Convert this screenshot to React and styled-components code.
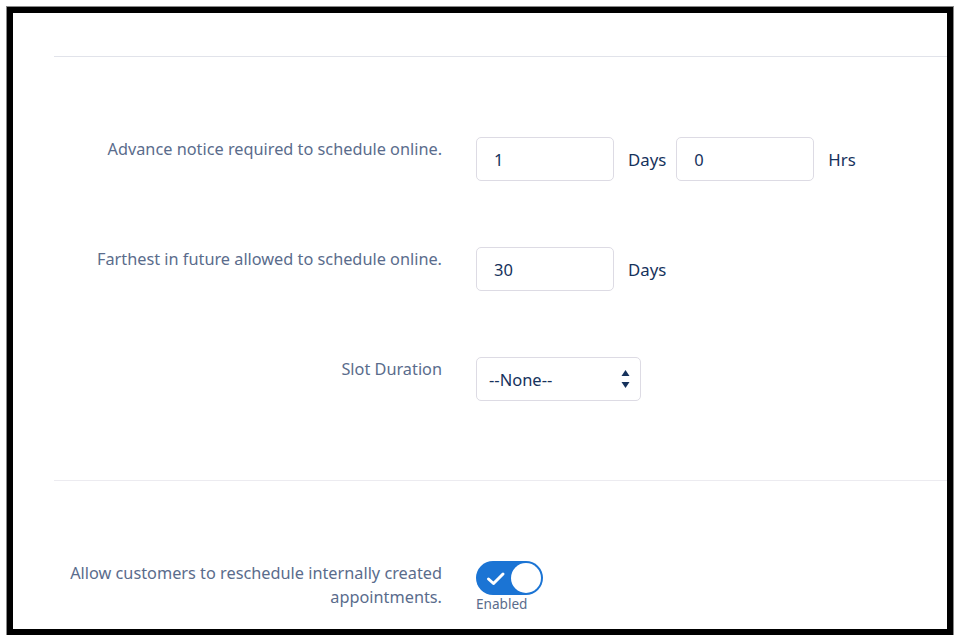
import React from 'react'
import styled, { createGlobalStyle } from 'styled-components'

const GlobalStyle = createGlobalStyle`
  html, body {
    margin: 0;
    padding: 0;
    background: #ffffff;
  }
  body {
    font-family: "Noto Sans", "Open Sans", sans-serif;
  }
`

const Frame = styled.div`
  box-sizing: border-box;
  margin: 7px 0 0 7px;
  width: 946px;
  height: 628px;
  border: 6px solid #000000;
  box-shadow: 0 0 0 1px #8a8a8a;
  overflow: hidden;
  background: #ffffff;
`

const Content = styled.div`
  padding: 43px 0 0 41px;
`

const Divider = styled.div`
  height: 1px;
  background: ${p => p.$light ? '#ecebf0' : '#e1e3ea'};
`

const Section = styled.div`
  display: flex;
  flex-direction: column;
  gap: 66px;
  padding: ${p => p.$padding || '80px 0 79px'};
`

const Row = styled.div`
  display: grid;
  grid-template-columns: 388px 1fr;
  column-gap: 34px;
  align-items: start;
`

const Label = styled.div`
  text-align: right;
  font-size: 16.3px;
  line-height: 24px;
  color: #5a6c8c;
`

const Controls = styled.div`
  display: flex;
  align-items: center;
`

const Input = styled.div`
  box-sizing: border-box;
  width: 138px;
  height: 44px;
  border: 1px solid #dddbe4;
  border-radius: 5px;
  padding: 0 17px;
  display: flex;
  align-items: center;
  font-size: 16.5px;
  color: #16325c;
`

const Unit = styled.span`
  font-size: 16.8px;
  color: #16325c;
  margin: 0 10px 0 14px;
`

const Select = styled(Input)`
  width: 165px;
  padding: 0 10px 0 12px;
  justify-content: space-between;
`

const Arrows = styled.svg`
  width: 9px;
  height: 22px;
  display: block;
`

const ToggleWrap = styled.div`
  display: flex;
  flex-direction: column;
  align-items: flex-start;
  gap: 1px;
`

const Toggle = styled.div`
  box-sizing: border-box;
  width: 67px;
  height: 34px;
  border-radius: 17px;
  background: #1b74d4;
  display: flex;
  align-items: center;
  justify-content: space-between;
  padding: 0 2px 0 10px;
`

const Knob = styled.div`
  width: 30px;
  height: 30px;
  border-radius: 50%;
  background: #ffffff;
`

const ToggleText = styled.span`
  font-size: 13.6px;
  line-height: 16px;
  color: #5a6c8c;
`

export default function App() {
  return (
    <>
      <GlobalStyle />
      <Frame>
        <Content>
          <Divider />
          <Section>
            <Row>
              <Label>Advance notice required to schedule online.</Label>
              <Controls>
                <Input>1</Input>
                <Unit>Days</Unit>
                <Input>0</Input>
                <Unit>Hrs</Unit>
              </Controls>
            </Row>
            <Row>
              <Label>Farthest in future allowed to schedule online.</Label>
              <Controls>
                <Input>30</Input>
                <Unit>Days</Unit>
              </Controls>
            </Row>
            <Row>
              <Label>Slot Duration</Label>
              <Controls>
                <Select>
                  <span>--None--</span>
                  <Arrows viewBox="0 0 9 22">
                    <path d="M4.5 2 L8.5 8 L0.5 8 Z" fill="#16325c" />
                    <path d="M0.5 14 L8.5 14 L4.5 20 Z" fill="#16325c" />
                  </Arrows>
                </Select>
              </Controls>
            </Row>
          </Section>
          <Divider $light />
          <Section $padding="80px 0 0">
            <Row>
              <Label>
                Allow customers to reschedule internally created
                <br />
                appointments.
              </Label>
              <ToggleWrap>
                <Toggle>
                  <svg width="20" height="15" viewBox="0 0 20 15">
                    <path d="M2.5 8 L7.5 12.5 L17 3" fill="none" stroke="#ffffff" strokeWidth="3" strokeLinecap="round" strokeLinejoin="round" />
                  </svg>
                  <Knob />
                </Toggle>
                <ToggleText>Enabled</ToggleText>
              </ToggleWrap>
            </Row>
          </Section>
        </Content>
      </Frame>
    </>
  )
}
